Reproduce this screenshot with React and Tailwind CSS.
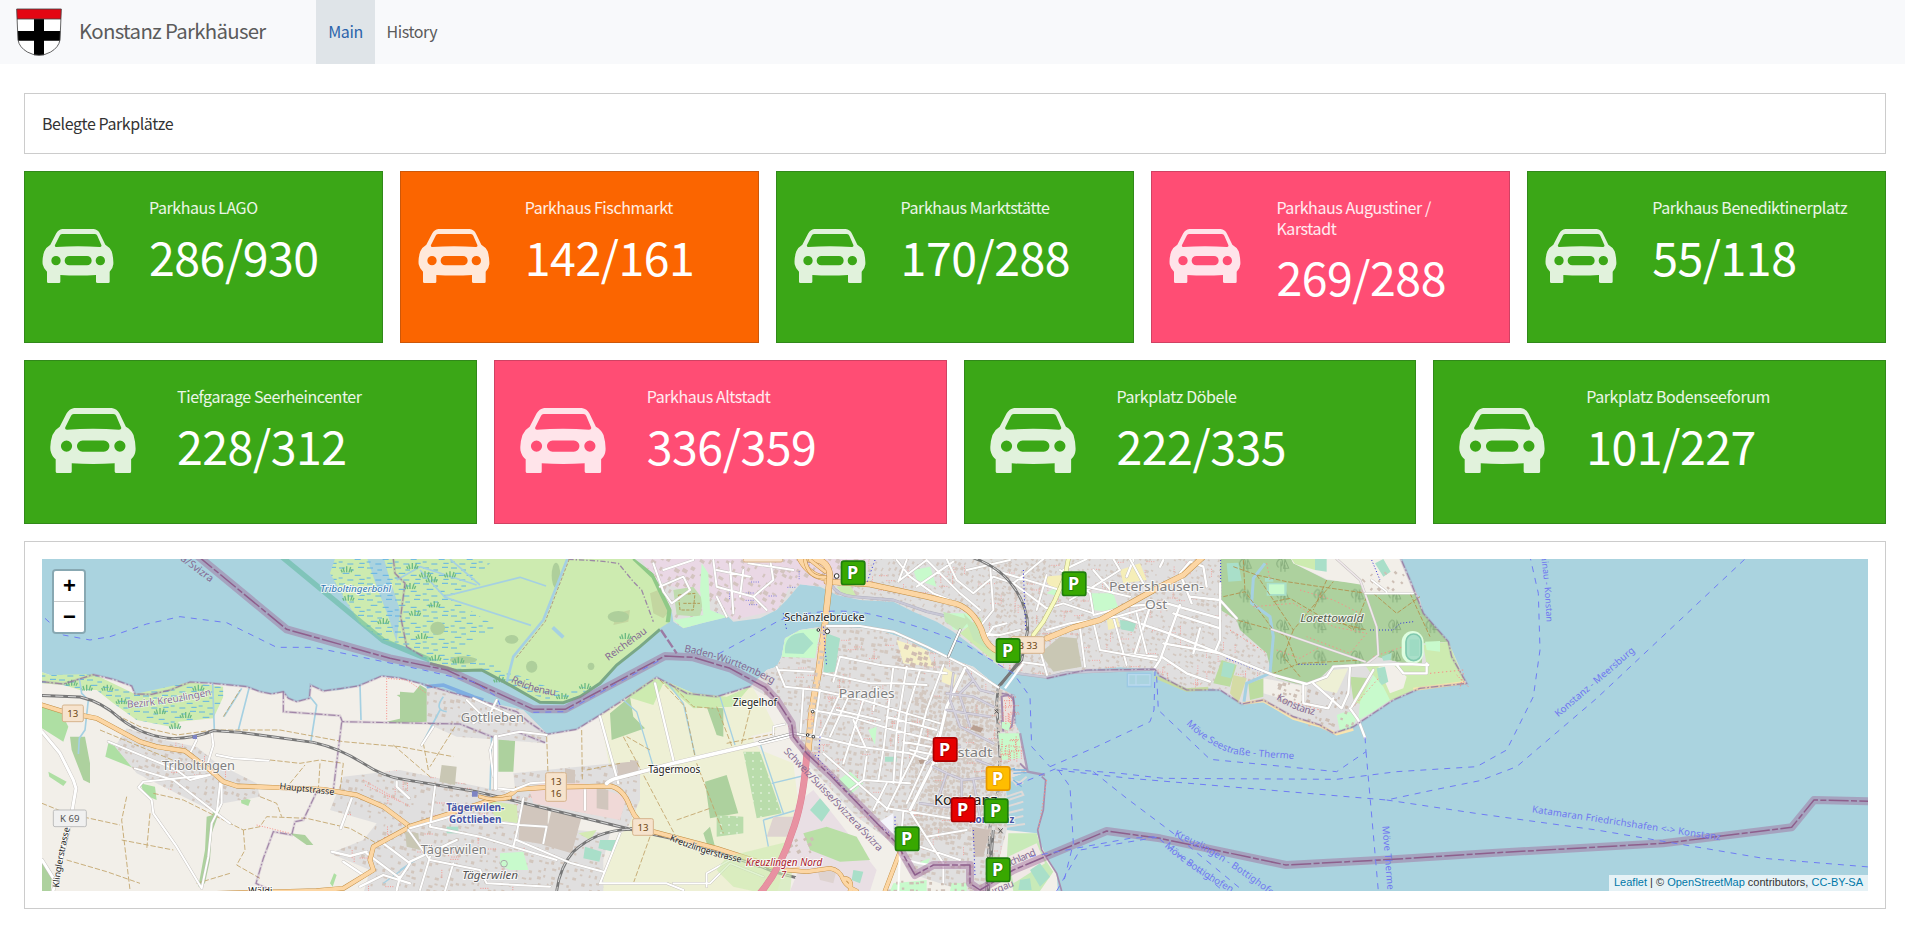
import React from "react";

const SANS = "font-['Noto_Sans_CJK_SC','Noto_Sans',sans-serif]";

const COLORS = {
  green: "bg-[#3ba717] border-[#31891a]",
  orange: "bg-[#fb6500] border-[#cd5709]",
  pink: "bg-[#ff4d74] border-[#d04263]",
};

const ROW_ONE = [
  ["Parkhaus LAGO", "286/930", "green"],
  ["Parkhaus Fischmarkt", "142/161", "orange"],
  ["Parkhaus Marktstätte", "170/288", "green"],
  ["Parkhaus Augustiner / Karstadt", "269/288", "pink"],
  ["Parkhaus Benediktinerplatz", "55/118", "green"],
];

const ROW_TWO = [
  ["Tiefgarage Seerheincenter", "228/312", "green"],
  ["Parkhaus Altstadt", "336/359", "pink"],
  ["Parkplatz Döbele", "222/335", "green"],
  ["Parkplatz Bodenseeforum", "101/227", "green"],
];

function Crest() {
  return (
    <svg className="h-12 w-[46px]" viewBox="0 0 138 144">
      <path d="M2 3H136L132 96Q128 118 104 132Q88 141 69 142Q50 141 34 132Q10 118 6 96Z" fill="#fff" />
      <path d="M2 3H136L135 33H3Z" fill="#e30613" />
      <path d="M54 33H84V142H54ZM5 69H133L132 98H6Z" fill="#000" />
      <path d="M2 3H136L132 96Q128 118 104 132Q88 141 69 142Q50 141 34 132Q10 118 6 96ZM3 33H135" fill="none" stroke="#444" strokeWidth="2.5" />
    </svg>
  );
}

function Car({ className }) {
  return (
    <svg className={className} viewBox="38 27 214 162" fill="#fff" fillOpacity=".85">
      <path
        fillRule="evenodd"
        d="M98 27Q145 25 192 27Q205 29 211 41L227 74Q240 81 246 94Q252 115 251 133Q250 146 240 155V185Q240 189 236 189H204Q199 189 199 185V165Q145 168 92 165V185Q92 189 88 189H56Q52 189 52 185V155Q42 147 39 133Q37 114 44 94Q50 81 62 74L79 41Q86 29 98 27ZM97 42Q92 42 90 47L76 75Q74 81 80 81Q145 77 210 81Q217 81 215 75L203 47Q201 42 196 42ZM79 108A14 14 0 1 0 79 136A14 14 0 1 0 79 108ZM212 108A14 14 0 1 0 212 136A14 14 0 1 0 212 108ZM119 108A14 14 0 0 0 119 136H172A14 14 0 0 0 172 108Z"
      />
    </svg>
  );
}

function Tile({ item, large }) {
  const [label, value, color] = item;
  return (
    <div className={`flex min-w-0 flex-1 border text-white ${COLORS[color]}`}>
      <div className={large ? "w-[152px] shrink-0 pl-[25px] pt-[47px]" : "w-[124px] shrink-0 pl-[17px] pt-[57px]"}>
        <Car className={large ? "h-[65px] w-[86px]" : "h-[54px] w-[72px]"} />
      </div>
      <div className="min-w-0 flex-1 pr-4 pt-[25px]">
        <div className="text-[16px] leading-[20.5px] tracking-[-0.42px] text-white/90">{label}</div>
        <div className="mt-[7px] text-[46.5px] leading-[62px] tracking-[-0.5px] whitespace-nowrap">{value}</div>
      </div>
    </div>
  );
}

/* ---- map drawing: three units per pixel ---- */

function random(seed) {
  let s = seed;
  return () => {
    s = (s * 16807) % 2147483647;
    return s / 2147483647;
  };
}

function houses(seed, x0, y0, x1, y1, step, deg, min = 5, max = 13) {
  const r = random(seed);
  const a = (deg * Math.PI) / 180;
  const c = Math.cos(a);
  const s = Math.sin(a);
  let d = "";
  for (let y = y0; y < y1; y += step) {
    for (let x = x0; x < x1; x += step) {
      if (r() < 0.2) continue;
      const w = min + r() * (max - min);
      const h = min + r() * (max - min) * 0.7;
      const px = x + r() * step * 0.5;
      const py = y + r() * step * 0.5;
      d += `M${px.toFixed(1)} ${py.toFixed(1)}l${(w * c).toFixed(1)} ${(w * s).toFixed(1)}l${(-h * s).toFixed(1)} ${(h * c).toFixed(1)}l${(-w * c).toFixed(1)} ${(-w * s).toFixed(1)}z`;
    }
  }
  return d;
}

function specks(seed, x0, y0, x1, y1, n) {
  const r = random(seed);
  let d = "";
  for (let i = 0; i < n; i++) {
    let x = x0 + r() * (x1 - x0);
    let y = y0 + r() * (y1 - y0);
    const vertical = r() < 0.5;
    for (let k = 0; k < 4; k++) {
      d += `M${x.toFixed(0)} ${y.toFixed(0)}h3`;
      if (vertical) y += 7;
      else x += 7;
    }
  }
  return d;
}

const G6 = ({ children }) => <g transform="translate(1110 0)">{children}</g>;
const G7 = ({ children }) => <g transform="translate(2190 0)">{children}</g>;
const G8 = ({ children }) => <g transform="translate(3270 0)">{children}</g>;
const G9 = ({ children }) => <g transform="translate(4350 0)">{children}</g>;

const Road = ({ d, w = 7, c = "#fff", edge = "#c4c0bd" }) => (
  <g fill="none" strokeLinecap="round" strokeLinejoin="round">
    <path d={d} stroke={edge} strokeWidth={w + 2.5} />
    <path d={d} stroke={c} strokeWidth={w} />
  </g>
);
const Main = ({ d, w = 12 }) => <Road d={d} w={w} c="#fcd6a4" edge="#c08a3c" />;
const Rail = ({ d }) => (
  <g fill="none">
    <path d={d} stroke="#777" strokeWidth="8.5" />
    <path d={d} stroke="#e8e8e8" strokeWidth="2.6" strokeDasharray="24 14" />
  </g>
);
const Track = ({ d }) => <path d={d} fill="none" stroke="#c2a469" strokeWidth="2.6" strokeDasharray="16 6" />;
const Stream = ({ d, w = 5 }) => <path d={d} fill="none" stroke="#a5d0e2" strokeWidth={w} strokeLinejoin="round" />;
const Ferry = ({ d }) => <path d={d} fill="none" stroke="#6f7cf5" strokeWidth="3" strokeDasharray="18 18" />;
const Limit = ({ d }) => (
  <g fill="none">
    <path d={d} stroke="#9d7ba6" strokeOpacity=".25" strokeWidth="8" />
    <path d={d} stroke="#92739c" strokeOpacity=".8" strokeWidth="3.5" strokeDasharray="22 6 5 6" />
  </g>
);
const Frontier = ({ d }) => (
  <g fill="none" strokeLinejoin="round">
    <path d={d} stroke="#a06f9c" strokeOpacity=".48" strokeWidth="24" />
    <path d={d} stroke="#8d5f8c" strokeWidth="4.5" strokeDasharray="60 7 18 7" />
  </g>
);
const Label = ({ x, y, w, size = 30, fill = "#222", children, ...rest }) => (
  <text x={x} y={y} textLength={w} lengthAdjust="spacingAndGlyphs" fontSize={size} fill={fill} stroke="#fff" strokeOpacity=".75" strokeWidth="6" strokeLinejoin="round" paintOrder="stroke" {...rest}>
    {children}
  </text>
);
const Along = ({ id, d, size = 29, fill = "#7077f0", w, halo = 0, children, ...rest }) => (
  <g>
    <path id={id} d={d} fill="none" />
    <text fontSize={size} fill={fill} stroke="#fff" strokeOpacity=".7" strokeWidth={halo} paintOrder="stroke" textLength={w} {...rest}>
      <textPath href={`#${id}`}>{children}</textPath>
    </text>
  </g>
);
const Shield = ({ x, y, w, h = 50, lines, grey }) => (
  <g>
    <rect x={x} y={y} width={w} height={h} rx="5" fill={grey ? "#f0f0f0" : "#f6e3cd"} stroke={grey ? "#bdbdbd" : "#d6b48c"} strokeWidth="3" />
    {lines.map((t, i) => (
      <text key={t} x={x + w / 2} y={y + 36 + i * 36} fontSize="29" textAnchor="middle" fill={grey ? "#555" : "#6b4511"}>
        {t}
      </text>
    ))}
  </g>
);

const PINS = [
  [243, 32, "g"],
  [906, 65, "g"],
  [708, 265, "g"],
  [519, 562, "r"],
  [678, 649, "y"],
  [573, 743, "r"],
  [672, 746, "g"],
  [405, 830, "g"],
  [678, 923, "g"],
];
const PIN_FILL = { g: ["#38a800", "#1f7d0c"], r: ["#e60000", "#a80000"], y: ["#ffbd00", "#e69800"] };

const SOUTH =
  "M0 355L60 375L110 388L190 372L250 388L305 408L315 432L365 433L420 420L480 396L550 400L650 410L690 425L725 432L760 425L775 445L800 455L838 445L842 405L880 423L930 420L985 408L1055 378L1110 384L1170 400L1200 420L1280 430L1330 445L1410 470L1460 485L1495 515L1550 553L1640 538L1710 495L1760 465L1810 430L1880 382L1905 395L1970 430L2060 440L2150 415L2170 408L2210 360L2240 350L2255 320L2265 265L2310 240L2390 228L2540 238L2620 265L2690 300L2750 325L2830 350L2905 412L2915 430L2950 435L2955 520L2940 550L2970 550L2980 600L2993 665L2950 680L2925 690L2930 740L2930 840L3020 850L3040 900L3080 970L3085 1040L0 1040Z";
const NORTH =
  "M1805 20L1870 70L1925 180L1930 215L1960 235L2015 220L2095 200L2110 215L2190 205L2240 180L2270 150L2310 103L2370 110L2420 135L2490 150L2590 155L2650 185L2720 215L2770 245L2830 290L2910 350L2960 370L3050 385L3110 370L3170 360L3270 352L3375 358L3390 378L3470 420L3535 415L3570 420L3635 462L3700 450L3740 475L3790 500L3870 525L3910 550L3970 530L4030 490L4090 450L4170 415L4310 400L4265 320L4255 275L4180 190L4170 150L4140 90L4110 20Z";
const RIED =
  "M917 20L900 70L940 140L990 220L1060 270L1130 290L1200 335L1280 362L1355 360L1430 400L1530 457L1600 458L1650 440L1710 400L1760 345L1830 290L1890 235L1920 215L1925 180L1870 70L1805 20Z";
const TOWN =
  "M2160 410L2210 360L2240 350L2255 320L2265 265L2310 240L2390 228L2540 238L2620 265L2690 300L2830 350L2905 412L2950 435L2955 520L2970 550L2993 665L2925 690L2930 840L2880 1030L2820 1030L2640 970L2590 880L2480 800L2330 640L2280 540L2230 450Z";

function MapView() {
  return (
    <svg className="block h-full w-full font-['Noto_Sans',sans-serif]" viewBox="36 27 5478 996" preserveAspectRatio="none">
      <defs>
        <clipPath id="town"><path d={TOWN} /></clipPath>
        <clipPath id="north"><path d={NORTH} /></clipPath>
        <clipPath id="ried"><path d="M900 20H1400L1270 150L1400 230L1280 300L1500 390L1600 430L1700 400L1600 470L1350 370L900 300Z" /></clipPath>
        <clipPath id="riedAll"><path d={RIED} /></clipPath>
        <clipPath id="reedW"><path d="M0 355L60 375L190 372L315 432L480 396L580 410V440L550 505L445 515V535L320 510L250 460L200 420L150 420L100 405L36 400Z" /></clipPath>
        <clipPath id="villages">
          <path d="M255 590L290 535L400 570L500 590L560 640L620 670L680 700L690 740L580 760L560 790L460 740L320 670Z M900 780L940 680L1110 660L1250 690L1500 740L1470 800L1640 840L1740 850L1720 930L1720 1030L1000 1030L1020 960L900 910L1000 870L1040 820Z M1190 400L1300 440L1480 480L1550 550V580L1280 560L1190 520Z M1450 670L1750 640L1830 650V750L1790 840L1460 760Z" />
        </clipPath>
        <pattern id="reeds" width="84" height="48" patternUnits="userSpaceOnUse">
          <path d="M3 6h18M34 12h14M60 4h18M14 22h20M50 28h18M2 36h12M28 42h18M64 40h16" stroke="#5fb2e6" strokeWidth="3" />
        </pattern>
        <g id="reed">
          <path d="M0 22V4M-7 22L-11 8M7 22L12 6M-13 22L-17 14M13 22L17 13" fill="none" stroke="#6cba83" strokeWidth="4" />
        </g>
        <g id="tree">
          <path d="M0 25V-6M12 25V4M-7 12C-18 2 -10 -8 -4 -13C5 -16 7 -2 2 8M8 15L12 -11L23 14Z" fill="none" stroke="#87ad7d" strokeWidth="3" />
        </g>
        <pattern id="trees" width="112" height="92" patternUnits="userSpaceOnUse"><use href="#tree" x="35" y="40" /></pattern>
        <pattern id="orchard" width="24" height="24" patternUnits="userSpaceOnUse"><rect width="24" height="24" fill="#b9dcab" /><circle cx="9" cy="9" r="3" fill="#dcefd5" /></pattern>
      </defs>

      <rect x="0" y="0" width="5600" height="1100" fill="#aad3df" />
      <path d={SOUTH} fill="#f2efe9" />
      <path d={RIED} fill="#cdebb0" />
      <path d={NORTH} fill="#e0dfdf" />
      <path d={TOWN} fill="#e0dfdf" />

      {/* reserve */}
      <g clipPath="url(#riedAll)">
        <path d="M1010 20L1060 20L1080 90L1110 180L1100 275L1075 200L1040 110Z" fill="#aad3df" />
        <g clipPath="url(#ried)"><rect x="900" y="20" width="900" height="460" fill="url(#reeds)" /></g>
        <G6>
          <path d="M650 190L690 180L685 215L640 225ZM750 130L800 110L810 180L790 205L760 190Z" fill="#c3d6a0" />
          <g fill="#aecf9b">
            <ellipse cx="113" cy="235" rx="22" ry="20" /><ellipse cx="335" cy="268" rx="20" ry="13" /><ellipse cx="395" cy="350" rx="17" ry="18" />
            <ellipse cx="573" cy="349" rx="10" ry="11" /><ellipse cx="655" cy="200" rx="32" ry="17" /><ellipse cx="468" cy="76" rx="13" ry="38" /><ellipse cx="190" cy="330" rx="40" ry="11" />
          </g>
          <path d="M505 28L600 33L655 40L700 95L725 120L760 215" fill="none" stroke="#9d8aa5" strokeWidth="4" strokeDasharray="16 6 4 6" />
          <path d="M706 20L765 75L815 180L810 218" fill="none" stroke="#8fc987" strokeWidth="26" />
          <Stream w={8} d="M502 27L430 210L340 320L318 405" />
          <path d="M508 27L436 214L348 324" fill="none" stroke="#b29b86" strokeWidth="3" strokeDasharray="10 5" />
          <Stream d="M-10 90L60 50L230 105M130 140L360 82L438 108M60 60L135 142L393 226M150 27L240 105" />
          <path d="M458 232L490 262" stroke="#a5d0e2" strokeWidth="11" />
        </G6>
      </g>
      {[[950, 45], [955, 130], [1060, 200], [1155, 175], [1175, 245], [1185, 60], [1140, 95], [1147, 35], [1205, 75], [1260, 60], [1213, 150], [1216, 310], [1285, 318], [1408, 375], [1596, 425], [1665, 395], [1786, 245]].map(([x, y]) => (
        <use key={`${x}-${y}`} href="#reed" x={x} y={y} />
      ))}
      <path d="M755 20L1060 272L1200 330" fill="none" stroke="#5cb89a" strokeOpacity=".55" strokeWidth="16" />
      <path d="M1200 340L1280 362L1355 360L1430 400L1530 457L1600 458L1650 440L1710 400L1760 345L1830 290L1890 238" fill="none" stroke="#7aa886" strokeWidth="9" />

      {/* western shore and fields */}
      <g clipPath="url(#reedW)">
        <rect x="0" y="340" width="620" height="210" fill="#cdebb0" />
        <rect x="0" y="340" width="620" height="210" fill="url(#reeds)" />
      </g>
      {[[125, 385], [232, 400], [275, 440], [390, 470], [467, 482], [505, 400], [435, 515], [170, 400]].map(([x, y]) => (
        <use key={`${x}-${y}`} href="#reed" x={x} y={y} />
      ))}
      <path d="M36 470L95 490L115 530L100 575L36 535ZM235 580L325 620L312 655L226 620ZM330 700L375 710L380 750L345 735ZM55 665L110 695L100 708L58 680ZM632 742L662 750L655 768L634 760ZM900 1000L912 970L920 975L908 1010Z" fill="#aedfa3" />
      <path d="M120 560L165 560L180 640L180 700L160 690L125 600ZM36 930L65 980L62 1030L36 1030ZM548 740L575 725L570 780L545 850L540 930L525 1000L505 1010L525 900L530 800L548 795ZM780 850L825 855L850 885L830 885ZM1100 435L1150 430L1170 405L1195 420L1195 515L1100 518L1070 515L1135 500L1135 460Z" fill="#add19e" />
      <path d="M1755 640L1950 590L2160 555L2190 600L2290 640L2310 800L2240 1030L1700 1030L1760 860L1800 830L1780 720Z" fill="#eef0d5" />
      <path d="M1710 495L1790 440L1880 385L1920 400L1990 430L2060 440L2165 408L2210 480L2240 540L1740 660Z" fill="#eef0d5" />
      <path d="M1405 545L1457 545L1450 665H1405ZM1740 490L1800 440L1810 500L1845 535L1745 570ZM1110 425L1170 430L1170 515H1110ZM2025 695L2090 675L2125 790L2040 805ZM2020 850L2040 830L2055 890L2035 895ZM2030 470L2080 475V560L2060 555Z" fill="#add19e" />
      <path d="M1790 440L1870 385L1910 395L1990 430L2090 440L2160 410L2110 470L1990 475L1900 400L1870 465Z" fill="#cdebb0" />
      <path d="M2140 605H2190L2255 790L2180 805ZM2060 795L2140 800L2140 850L2060 860Z" fill="url(#orchard)" />
      <g clipPath="url(#villages)">
        <rect x="200" y="380" width="1700" height="700" fill="#e0dfdf" />
        <path d={houses(7, 240, 500, 720, 800, 20, 22)} fill="#d2c6bd" />
        <path d={houses(11, 880, 400, 1860, 1030, 22, 14)} fill="#d2c6bd" />
        <path d={specks(4, 900, 660, 1500, 1030, 60)} stroke="#f6938e" strokeWidth="3" />
        <path d={specks(6, 400, 560, 600, 760, 12)} stroke="#f6938e" strokeWidth="3" />
      </g>
      <G6>
        <path d="M390 725L430 690L550 700L680 740L660 810L400 760Z" fill="#f0d9d7" />
        <path d="M365 762L445 770L440 885L355 870ZM455 780L545 800L515 910L430 885ZM650 640L690 635V680H655ZM690 630L715 632V665L690 672ZM495 655L525 660V700H495ZM465 710L500 715V745H465ZM590 715L625 720V780L590 775Z" fill="#d1c6bd" />
        <path d="M600 870L648 870L640 905L595 895ZM555 890L605 905L598 935L550 925Z" fill="#a9dfc9" />
        <path d="M535 850L590 840L570 870ZM260 750L350 765L355 820L290 810Z" fill="#d4eab4" />
        <path d="M300 910L370 905L385 960L330 960L300 945Z" fill="#c8facc" />
        <circle cx="312" cy="941" r="10" fill="none" stroke="#aaa" strokeWidth="3" />
        <path d="M125 645L170 650L165 705L118 695ZM15 845L55 850L60 900L20 890Z" fill="#c9c7b4" />
        <path d="M140 830L175 830V850H140Z" fill="#a9dfc9" />
        <path d="M80 410L130 405L220 440M170 425L250 450" fill="none" stroke="#7eaee2" strokeWidth="11" />
      </G6>
      <Stream d="M148 385L155 430L175 450L165 540L148 565L145 612M635 415L582 500M657 415L625 540M840 440L860 465L843 572M990 405L993 510M548 400L553 540M1230 480L1175 585M1240 440Q1210 480 1250 485M1385 560L1380 720" />
      <Stream w={4} d="M1780 450L1820 485L1870 650M1910 395L1960 460L1995 615M2070 440L2115 585M2190 580L2260 790M2225 700L2330 675M2200 810L2300 780M2200 810L2215 890M1110 960L1170 920L1060 1000" />
      <Track d="M36 465L80 480M580 500L630 420M550 540L440 555L330 530L270 500M550 540L750 540L940 575L1110 590L1270 620M210 540L500 660M290 740L275 810L300 1020M360 790L350 900M36 760L110 790L270 825M110 930L230 965L330 1000M275 870L430 900M370 730L460 750L640 840L690 830L710 800L830 805L960 835L1040 880M640 840L645 900L620 945L690 985M690 740L740 760L755 800M720 630L810 640L870 630L940 640L930 720M780 700L825 645M870 640L865 720M1275 530L1200 650M1550 560L1555 700M1655 540L1657 690M1090 585L1200 680M500 1000L600 970M1180 580L1195 660" />
      <Track d="M1780 560L1935 855M1860 600L1790 560M1890 390L1965 470L1995 620M1920 400L1990 470L2050 475M2000 640L2080 850M2060 470L2110 600M2160 480L2130 600M1940 810L2040 775M1860 860L1810 1000M2090 580L2240 550M1670 660L1770 640" />
      <Limit d="M36 395L100 402L190 374L250 388L305 408L315 432L365 433L420 420L480 396L550 400L650 410L690 425L725 432L760 425L775 445L800 455L838 445L842 405L880 423L985 408L1055 378L1110 384" />
      <Limit d="M1110 384L1170 400L1280 432L1330 445L1460 485L1495 515L1550 553L1640 538L1710 495L1810 430L1880 382L1970 430L2060 440L2165 408" />
      <Limit d="M760 425V485L930 497L937 515L1290 522L1390 562L1460 545L1545 578" />
      <Limit d="M935 517L910 720L860 725L820 810L795 815L785 855L730 845L700 925L678 1000L720 1020" />
      <Limit d="M1090 27L1095 70L1125 100L1112 200L1130 290L1180 320" />
      <path d="M1070 508V385L1130 390L1190 430M680 825L780 850M1000 690L1140 770M1005 705L1110 755" fill="none" stroke="#fa8e87" strokeWidth="3" strokeDasharray="3 5" />

      {/* western roads */}
      <Road d="M36 545L90 610L130 690L138 715L118 830L70 1020M36 930L70 985" w={9} />
      <Road d="M235 575L440 660L480 690L540 675L340 695L325 712L365 750L370 790L440 890L515 1015M315 655L430 690L560 790L570 700M480 610L500 570M545 545L550 585L530 650M560 615L610 625L715 632M575 700L575 760L545 820L535 920L515 1015M560 790L600 820" w={6} />
      <Road d="M965 745L932 835M1100 695V710L1138 745M905 905L960 918L1010 905M940 935L1000 975M1010 910L1110 985L1140 940L1060 880M1110 980L1100 1020M1140 935L1280 870M990 1010L1060 975L1140 1000" w={7} />
      <Rail d="M0 435L150 441Q215 455 270 505Q340 560 430 566Q500 563 550 542L630 547L850 577Q930 595 1000 640Q1060 680 1120 688L1340 725L1810 840L2060 895L2230 965L2400 1010L2500 1025" />
      <Rail d="M1800 838Q1700 840 1630 905Q1590 950 1580 1023" />
      <Rail d="M1800 835L1830 838L1970 873L2190 950" />
      <Main d="M20 460L100 485L200 505L330 575L380 590L465 603L540 660L580 695L620 708L880 718L980 735L1060 770L1140 830L1030 890L1020 930L1030 960L940 1015L860 1022L560 1030" />
      <Main d="M1138 830L1400 745Q1440 740 1460 718L1550 712L1740 708Q1780 715 1800 770Q1820 820 1870 845L2060 895L2230 950Q2330 950 2400 980" />
      <Main w={9} d="M1350 740Q1390 755 1440 743" />
      <G6>
        <Road d="M285 715L287 560L360 545L440 555M285 560L270 600L280 680M100 530L65 585M290 715L340 720L390 700L460 695M105 710L90 830M370 745L350 850L340 890M350 870L515 940L610 965M90 830L240 860L470 930M25 840L90 930L240 960M90 920L60 1020M160 940L135 1023M240 960L260 1000L450 1010M30 835L150 800L360 825L440 830L430 880M555 720V780M660 850L600 1000L800 1000L850 1020M200 450L250 500L220 520M220 445L340 500M290 450L260 510" w={6} />
        <Road d="M287 560V715" w={11} />
        <Road d="M600 500L655 700M765 400L820 630" w={7} />
        <Road d="M620 700Q630 690 650 685L820 640L1150 563L1190 550" w={11} />
        <Road d="M1120 555V530L1155 522M820 1000L930 1000L990 940L1090 980M920 1010V970L990 930" w={5} />
      </G6>
      <path d="M2295 870L2280 1030H2200L2110 1010L2060 960L2090 920Z" fill="#cdebb0" fillOpacity=".6" />
      <path d="M488 555H501V567H488ZM1326 724H1343V740H1326Z" fill="#7d84c4" />

      {/* northern quarters */}
      <g clipPath="url(#north)">
        <path d="M1830 20H2520L2500 100L2280 110L2240 180L2110 210L2060 150L1960 120L1870 90Z" fill="#ead8e5" />
        <path d={houses(21, 1840, 20, 2480, 230, 24, 30, 6, 17)} fill="#d3c4bf" />
        <path d={houses(25, 2440, 20, 3050, 390, 18, -60, 4, 12)} fill="#d3c8c0" />
        <path d={houses(29, 2900, 20, 3700, 480, 17, 25, 4, 11)} fill="#d3c8c0" />
        <path d={houses(31, 3600, 400, 4100, 560, 20, 25)} fill="#d3c8c0" />
        <path d={specks(13, 2500, 30, 3700, 420, 200)} stroke="#f59b96" strokeWidth="2.5" />
        <path d={specks(15, 1840, 30, 2500, 220, 22)} stroke="#6b6bdc" strokeWidth="2.5" />
        <path d="M1930 120L1990 110L2020 150L2010 200L1940 195Z" fill="#bfdcae" />
        <path d="M1945 135L1995 130L1990 180L1950 180ZM1960 160H2010" fill="none" stroke="#b09a58" strokeWidth="3" strokeDasharray="10 4" />
        <path d="M2015 40L2035 70L2040 180L2090 200L2060 220L1960 235L1930 210L2020 195L2010 120Z" fill="#c8facc" />
        <path d="M2650 60L2700 50L2720 110L2660 90ZM2750 190L2820 190L2830 230L2770 240ZM3180 130H3250L3270 190L3190 180ZM3050 130L3080 110L3090 140Z" fill="#c8facc" />
        <path d="M2850 200L2880 290L2920 320L2900 340L2790 250ZM2420 110L2460 105L2480 140L2440 135Z" fill="#cdebb0" />
        <path d="M3030 310L3090 260L3140 265L3155 350L3070 365Z" fill="#c9c7b4" />
        <path d="M3040 80L3100 75L3090 120L3060 110ZM3230 205L3260 195L3270 230L3235 240ZM3270 60L3330 40L3350 90L3280 100Z" fill="#f5eeb8" />
        <path d="M3270 210L3320 215L3310 245L3272 238Z" fill="#a9dfc9" />
      </g>
      <Road w={6} d="M1870 40L1900 125L1925 160L1980 120L1960 80L1890 110M1900 60L1990 30M2050 30L2060 110L2170 140L2210 180M2060 60L2160 80M2100 40L2110 190M2140 60L2130 140M2060 140L2090 200M2170 140L2230 90L2220 27M2155 40L2290 60" />
      <G8>
        <path d="M302 20L302 180L350 210L360 240L440 310L455 370L480 395L550 405L600 385L640 347L740 340L770 320L850 340L905 345L910 280L985 275L910 190L885 130L730 130L720 100L620 90L520 40L510 20Z" fill="#add19e" />
        <path d="M302 20L302 180L350 210L360 240L440 310L455 370L480 395L550 405L600 385L640 347L740 340L770 320L850 340L905 345L910 280L985 275L910 190L885 130L730 130L720 100L620 90L520 40L510 20Z" fill="url(#trees)" />
        <path d="M510 20L520 40L620 88L730 105V130L880 128L835 20Z" fill="#f2efe9" />
        <path d="M510 20L525 42L585 60V20Z" fill="#cdebb0" />
        <path d="M320 40L355 38L365 92L325 95ZM435 83H460V95H435ZM585 27H620V65L585 60ZM765 40L790 27L812 65L790 80ZM440 98H500V137H440Z" fill="#a9dfc9" />
        <path d="M447 103H493V132H447Z" fill="#c8facc" />
        <path d="M455 380L540 405L600 385L640 347L880 343L930 340L985 275L1040 400L900 415L820 450L700 530L640 550L600 525L520 500L430 450L365 462L300 420Z" fill="#e0dfdf" />
        <path d="M735 345L920 345L910 285L985 275L1035 395L900 412L760 475L700 455L760 380Z" fill="#cdebb0" />
        <path d="M775 350L820 345L860 380L850 415L810 430Z" fill="#f2efe9" />
        <path d="M770 355L795 350L805 395L780 408ZM785 320L815 308L812 330L790 332Z" fill="#a9dfc9" />
        <path d="M760 375L720 455L715 510L760 485L810 450L790 410ZM650 495Q690 475 710 500L700 530L660 545ZM915 275L960 273V305L920 300Z" fill="#c8facc" />
        <path d="M640 360L685 355L650 430L610 420L585 400Z" fill="#eef0d5" />
        <path d="M430 385L560 410L555 465L500 450L430 430Z" fill="#f2efe9" />
        <path d="M385 400L430 385V440L390 450ZM690 380L750 385L700 450ZM305 330L350 345L330 410L280 400Z" fill="#bcdca0" />
        <path d="M340 375L380 385L355 460L330 430Z" fill="#d5dba5" />
        <path d="M310 335L345 343L333 385L303 378Z" fill="#a9dfc9" />
        <path d={houses(41, 450, 390, 560, 460, 18, 20) + houses(43, 560, 420, 700, 520, 19, 20) + houses(45, 720, 60, 850, 120, 24, 45)} fill="#cdbfb5" />
        <rect x="845" y="243" width="66" height="98" rx="33" fill="#defde0" />
        <rect x="858" y="252" width="46" height="80" rx="23" fill="#a9dfc9" stroke="#7fc8ae" strokeWidth="5" />
        <rect x="869" y="268" width="28" height="50" fill="#9edbc3" />
        <path d="M105 380L200 420L265 415" fill="none" stroke="#c8dca0" strokeWidth="10" />
        <path d="M370 460L430 452L520 505L600 528L650 552L700 538" fill="none" stroke="#f9e5b0" strokeWidth="9" />
        <path d="M880 418L1035 398" stroke="#f9e5b0" strokeWidth="10" />
        <path d="M435 40L400 85L395 160L450 200L460 260L450 370L380 400L372 455" fill="none" stroke="#a5d0e2" strokeWidth="9" />
        <path d="M20 368H95V412H20Z" fill="#9cc9e4" />
        <path d="M26 374H90V405H26ZM48 405V375M60 404H90" fill="#aad3df" stroke="#b9d9ee" strokeWidth="4" />
        <path d="M340 50L410 75L500 95L600 110L740 130M310 140L375 125L460 240L350 210M410 75L520 240L640 95M460 155L510 145L620 210L740 240M520 240L490 320L540 380M740 140L700 240L640 200M760 130L830 190L900 140M530 340L500 260L460 240M620 90L580 180M370 30L375 125M870 130L930 260M730 330L540 340L460 370" fill="none" stroke="#b28f4b" strokeWidth="2.6" strokeDasharray="14 5" />
        <path d="M400 170L520 160L640 230L740 250L690 310L560 260M440 40L450 90M540 120L640 150L740 200M470 300L540 325L610 285M760 320L850 290M930 370L1030 360M700 470L780 380M330 240L440 310M500 450L600 480" fill="none" stroke="#fa8e87" strokeWidth="3" strokeDasharray="4 8" />
        <path d="M1010 375L1045 410M1030 370L1020 415" fill="none" stroke="#fa8e87" strokeWidth="3" strokeDasharray="4 5" />
        <path d="M302 30V180M755 30L780 90M750 240H820L840 220L880 215M535 343H620M0 200L140 245M320 325L460 378" fill="none" stroke="#3535d8" strokeWidth="3" strokeDasharray="3 6" />
        <Road w={5} c="#f0e8ec" d="M650 27L720 90L735 130L770 230L775 315L735 345M455 238L735 335" />
        <Road w={5} d="M735 130H880M755 90L800 125" />
        <Road w={7} d="M0 170L140 160L300 205M0 200L140 248L300 310L460 375L560 402L620 380L640 350L735 345L860 342L925 345M180 165L120 330L100 360M90 170L45 310M300 100V270L285 305M215 160L180 70L210 35L250 50L260 110M125 320L200 370L270 395M130 280L300 310M240 235L220 310M160 190L300 235M0 310L110 320M210 140L300 150L350 205M40 30L20 80M130 30L120 50M690 350L685 430L665 475L580 400M550 405V460L625 475L640 445M690 475L715 510L735 563M760 360L695 470M830 345L850 370H920V340" />
      </G8>
      <G7>
        <Road w={6} d="M410 30L450 80L520 130L570 150M440 30L415 95M420 90L500 30L560 90L600 130L660 180M470 110L580 35M560 27L590 90L640 130L700 80L760 100M620 60L750 30M760 100L860 175L910 160L1000 190M690 40L700 180L660 230M760 100L850 27M700 60L900 120M830 180L860 75M1000 190L990 130L910 60L980 27M900 60L980 110L1110 140M860 240L930 220L1070 200L1190 165M1000 195L1080 175M960 235L975 350M1000 215L1020 300L1190 330M1060 200L1100 345M1130 190L1160 310M840 300L862 378M780 335L850 345M660 250L720 255L780 240M680 260L700 230L740 220M930 150L1000 110L1080 60L1060 27M1000 60L1060 130M1110 27L1150 100" />
        <Road w={6} c="#c9c8d6" edge="#b0b0be" d="M215 105Q230 135 280 140L400 150L500 185L610 210M770 370L860 382L920 368L1180 358" />
        <path d="M550 185L630 210L600 245L555 215ZM610 190L680 260L700 310L640 270Z" fill="#c5e6b8" />
        <Road w={11} c="#f7fabf" edge="#b5b36b" d="M925 27L915 80L885 150L850 215L820 255" />
        <Main w={15} d="M120 27Q150 80 200 85M200 95L330 103L500 140L590 162Q640 180 665 240Q680 295 720 305M860 265L940 232L1020 210L1110 160L1200 110L1270 75L1330 20" />
        <Main w={17} d="M150 28Q205 25 210 80L195 220L175 370L155 480L145 600" />
        <Main w={9} d="M135 30Q145 85 195 82M150 30L195 65" />
        <Rail d="M630 20Q720 50 760 110Q805 170 803 240L785 330L715 410L710 460L720 620L715 720L690 830L680 1023" />
        <path d="M790 340L735 415" stroke="#fff" strokeWidth="7" /><path d="M776 335L722 405" stroke="#777" strokeWidth="8" />
      </G7>

      {/* old town and Paradies */}
      <g clipPath="url(#town)">
        <path d={houses(51, 2200, 220, 3000, 1030, 18, 12, 5, 14)} fill="#d3c8c0" />
        <path d={houses(57, 2640, 420, 2930, 860, 14, 20, 7, 13)} fill="#d3c8c0" />
        <path d={specks(61, 2240, 250, 2990, 960, 170)} stroke="#f59b96" strokeWidth="2.5" />
        <G7>
          <path d="M60 320L75 265L120 240L180 235L165 325ZM715 550H780V625L725 630ZM325 540L350 530L345 585ZM235 690L270 665L310 700L270 735Z" fill="#c8facc" />
          <path d="M75 310Q70 250 130 248L160 280L130 312ZM200 250L240 265L225 365L190 370ZM375 620H410V635H375Z" fill="#a9dfc9" />
          <path d="M410 270L500 300L520 350L430 340ZM550 350L590 375L580 410L545 395Z" fill="#f5f0c8" />
          <path d={houses(63, 410, 275, 520, 350, 20, 20, 9, 16)} fill="#d0bdb2" />
          <path d="M640 525L670 535L662 548L632 538ZM475 630L495 628L498 640L480 642Z" fill="#b89f91" />
          <path d="M635 830L690 840L670 920H645Z" fill="#cdbfb7" />
          <path d="M350 820L400 790V850L380 850Z" fill="#f4f4fa" />
        </G7>
      </g>
      <G7>
        <Road w={6} d="M200 228L300 228L400 245L500 290L620 350L715 412M50 350L75 410L170 420L310 450L440 490L540 520M240 320L360 345L560 370M190 370L330 400L410 400L500 405M155 480L270 500L400 540L520 570M150 555L300 590L450 610L530 640M55 360L160 365M240 320L220 395M270 430L210 560M310 450L250 640M400 350L370 600L355 690M440 350L410 540L400 700M480 360L440 490L420 700M550 345L500 480L470 600L380 780M190 610L380 775L450 785L570 805L660 810M130 420L120 570M180 420L160 560M240 430L180 560M280 510L320 600M270 720L310 690L450 700M510 590L430 575M440 760L540 540M310 690L320 620M340 780L380 700M450 785L550 940V1000M430 785L420 900M480 890L600 930M550 620L450 600M380 500L530 540M230 480L360 510M350 410L340 480M500 860L620 840" />
        <Road w={9} d="M615 355L560 470L520 640L450 780" />
        <Road w={5} c="#d6d3df" edge="#b4b0bf" d="M580 370L570 450L600 530L700 580M620 360L660 420L700 430M560 430L640 440L700 470M560 480L690 500M600 440L630 530M640 390L600 430M520 650L560 670L610 690L700 680M480 760L560 770L660 760M560 670L530 760M605 690V760M500 640L550 600L600 590M650 630L700 650L720 690M640 690L660 800" />
        <Road w={6} d="M600 240L565 320M0 575L100 550L160 560" c="#fff" edge="#777" />
        <path d="M725 440Q765 425 762 475L755 530Q730 545 728 510ZM780 640L800 660M730 545L725 510" fill="#ebe0dc" stroke="#a58caf" strokeWidth="6" />
        <path d="M725 515L755 518L745 542L725 535Z" fill="#c8facc" />
        <path d={specks(81, 728, 440, 755, 515, 14) + specks(83, 722, 555, 770, 620, 22)} stroke="#f58a84" strokeWidth="3" />
        <path d="M745 850L830 850L850 920L880 965L840 1023H760L740 930Z" fill="#c8eab8" />
        <path d="M745 920L830 880L855 940L760 1000Z" fill="#f0e8e6" /><path d="M810 960L840 940L870 980L840 1010ZM780 990L810 985L815 1020H775Z" fill="#a9dfc9" />
        <path d="M740 740L785 725L790 735L745 750M740 770L790 755M740 790L790 778M740 810L790 798M740 830L795 822M750 690L790 700M750 680L770 705L800 680" fill="none" stroke="#dfdad8" strokeWidth="6" />
        <path d="M760 660H800M760 670L800 668M760 690L785 710M735 662L765 655" fill="none" stroke="#7db4df" strokeWidth="4" />
        <path d="M845 680L857 690L850 780L833 840L845 900L890 970L905 1023" fill="none" stroke="#a58caf" strokeWidth="5" />
        <path d="M860 690L835 840" fill="none" stroke="#fa8e87" strokeWidth="3" strokeDasharray="4 6" />
        <path d="M780 550L790 600L803 665L855 675" fill="none" stroke="#a58caf" strokeWidth="7" strokeOpacity=".8" />
        <Rail d="M700 840L685 1023" />
        {/* southern suburbs */}
        <path d="M110 760L160 720L225 800L350 960L330 1023H90L120 950L50 960Z" fill="#e9dfe4" />
        <path d="M130 850L200 830L290 860L330 930L240 935L150 900Z" fill="#b9dfa6" />
        <path d="M150 780L180 745L210 780L185 815ZM280 960L310 965L300 1000L275 990Z" fill="#a9dfc9" />
        <path d="M480 935L510 925L500 950ZM400 1000L500 990V1023H390ZM575 1000H620V1023H570Z" fill="#c8facc" />
        <path d="M40 800L120 800L100 860L20 860ZM170 950L230 960L220 1000L180 990Z" fill="#ded3d0" />
        <path d={houses(71, 380, 990, 640, 1023, 20, 0) + houses(73, 60, 860, 160, 930, 20, -30)} fill="#cdbfb5" />
        <Road w={18} c="#e892a2" edge="#dc7f92" d="M140 615Q130 760 95 850Q60 960 0 1030" />
        <Main w={11} d="M80 960L140 965L210 955Q240 960 250 990Q260 1010 290 1023M250 985Q280 985 270 1023M420 905L375 1023" />
        <path d="M165 615L230 690L350 820L390 850M405 800V850M640 840L645 980M190 230L200 350M345 30L320 100M790 60L797 240M70 190L80 240M180 560L175 630" fill="none" stroke="#2424dd" strokeWidth="3" strokeDasharray="3 8" />
        <path d="M420 905L415 1023M420 920Q500 960 620 940" fill="none" stroke="#fff" strokeWidth="6" />
        <g fill="#fff" stroke="#333" strokeWidth="3">
          <circle cx="230" cy="78" r="7" /><circle cx="202" cy="244" r="7" /><circle cx="175" cy="240" r="4" /><circle cx="158" cy="485" r="4" /><circle cx="143" cy="555" r="4" /><circle cx="160" cy="560" r="4" />
        </g>
        <path d="M715 835L728 850M728 835L715 850M704 479L716 491M716 479L704 491" stroke="#555" strokeWidth="3" />
      </G7>

      {/* boundaries and ferry lines */}
      <Limit d="M2915 430L2950 436L2955 520M3050 385L3170 360L3375 358L3390 378L3470 420L3570 420L3635 462L3700 450L3790 500L3870 525L3910 550L3970 530L4090 450L4170 415L4310 400L4265 320L4255 275L4180 190L4140 90L4110 20" />
      <path d="M1893 240L1940 310" fill="none" stroke="#9b7aa3" strokeWidth="7" strokeDasharray="28 7" />
      <Frontier d="M500 15L770 238L1080 325L1250 360L1510 478H1605L1905 318L1990 322L2100 355L2205 412L2240 450L2285 520L2290 560L2330 610L2400 675L2600 880L2655 975L2710 945L2820 945V1000L2850 1020L2950 960L3230 843L3390 865L3768 945L4090 928L4350 911L4900 880L5285 832L5352 750L5530 754" />
      <Ferry d="M45 205L100 255L180 270L240 260L350 222L450 200L590 218L740 292L850 292L950 312L1180 360L1330 395L1400 440L1410 465M1510 487L1605 485L1900 325M2065 312L2170 255L2250 210Q2380 170 2510 190Q2650 220 2800 280L2950 370L3000 440L3005 590L3060 650" />
      <Ferry d="M3060 650L3200 590L3360 515L3372 480L3375 365M3380 380L3385 480L3540 628L3920 665L4008 605L4005 560M4008 605L4020 740L4045 1023M2960 705L3080 655L3270 670L3400 685L3920 688L4100 665L4340 650L4430 600L4510 440L4530 300L4525 130L4500 20M3080 660L3300 685L4070 750L4220 718L4350 692L4460 650L4700 445L5145 27M4070 750L4350 792L4700 840L5200 925L5530 952M3085 660L3120 710L3130 880L3100 1000M3190 665L3290 745L3430 850L3640 1023M3000 920L3300 865L3380 860L3540 990L3580 1023M3080 1023L3150 900L3380 862" />

      {/* lettering */}
      <Along id="svizra" d="M440 22L560 112" size="31" fill="#846a93">ra/Svizra</Along>
      <Label x="871" y="126" w="212" size={29} fill="#3277b5" fontStyle="italic">Triboltingerbohl</Label>
      <Along id="bezirk" d="M292 473Q400 468 560 432" size="30" fill="#8a7194" w="256" halo={4}>Bezirk Kreuzlingen</Along>
      <Label x="396" y="659" w="219" size={39} fill="#808080">Triboltingen</Label>
      <Along id="haupt" d="M748 717L925 737" size="27" fill="#222" halo={3} w="165">Hauptstrasse</Along>
      <Along id="kling" d="M87 1013Q92 940 125 815" size="27" fill="#222" halo={3} w="182">Klinglerstrasse</Along>
      <Label x="655" y="1032" w="72" size={27}>Wäldi</Label>
      <Shield x={97} y={465} w={63} lines={["13"]} />
      <Shield x={70} y={780} w={99} lines={["K 69"]} grey />
      <G6>
        <Along id="reich1" d="M332 395Q390 430 490 440" size="30" fill="#846a93" w="142">Reichenau</Along>
        <Along id="reich2" d="M625 333L752 240" size="30" fill="#846a93" w="146">Reichenau</Along>
        <Along id="baden" d="M852 305Q990 330 1130 408" size="30" fill="#846a93" w="285">Baden-Württemberg</Along>
        <Label x="182" y="517" w="190" size={39} fill="#808080">Gottlieben</Label>
        <Label x="999" y="468" w="132">Ziegelhof</Label>
        <Label x="745" y="668" w="156">Tägermoos</Label>
        <Label x="62" y="913" w="198" size={39} fill="#808080">Tägerwilen</Label>
        <Label x="187" y="988" w="167" size={31} fill="#555" fontStyle="italic">Tägerwilen</Label>
        <Label x="139" y="784" w="174" size={29} fill="#4756a6" fontWeight="700">Tägerwilen-</Label>
        <Label x="147" y="818" w="157" size={29} fill="#4756a6" fontWeight="700">Gottlieben</Label>
        <Along id="kreuz" d="M808 870Q900 912 1035 940" size="27" fill="#222" halo={3} w="226">Kreuzlingerstrasse</Along>
        <Label x="1037" y="948" w="230" size={30} fill="#a8182d" fontStyle="italic">Kreuzlingen Nord</Label>
        <Label x="1143" y="984" size={28} fill="#a8182d" fontStyle="italic">7</Label>
        <Shield x={437} y={668} w={62} h={86} lines={["13", "16"]} />
        <Shield x={698} y={806} w={62} lines={["13"]} />
      </G6>
      <G7>
        <rect x="-50" y="-12" width="118" height="48" rx="5" fill="#f6e3cd" stroke="#d6b48c" strokeWidth="3" />
        <Label x="73" y="213" w="241">Schänzlebrücke</Label>
        <Label x="236" y="443" w="168" size={38} fill="#808080">Paradies</Label>
        <Label x="537" y="620" w="160" size={38} fill="#808080">Altstadt</Label>
        <Label x="522" y="766" w="190" size={43} fill="#222">Konstanz</Label>
        <Label x="627" y="819" w="136" size={29} fill="#4756a6" fontWeight="700">Konstanz</Label>
        <Along id="schweiz" d="M70 605L370 920" size="30" fill="#846a93" w="415">Schweiz/Suisse/Svizzera/Svizra</Along>
        <Along id="deutsch" d="M690 975L850 905" size="29" fill="#846a93" w="152">Deutschland</Along>
        <Along id="thurgau" d="M660 1050L775 1003" size="29" fill="#846a93" w="112">Thurgau</Along>
        <Shield x={753} y={260} w={100} lines={["B 33"]} />
      </G7>
      <G8>
        <Label x="-33" y="122" w="284" size={37} fill="#808080">Petershausen-</Label>
        <Label x="75" y="178" w="67" size={37} fill="#808080">Ost</Label>
        <Label x="541" y="216" w="189" size={32} fill="#55604f" fontStyle="italic">Lorettowald</Label>
        <Along id="kn" d="M468 447Q520 483 590 497" size="30" fill="#846a93" w="125">Konstanz</Along>
        <Along id="see" d="M198 522Q265 590 345 613Q430 622 540 628" w="353">Möve Seestraße - Therme</Along>
        <Along id="bott1" d="M162 858Q290 910 480 1058" w="362">Kreuzlingen - Bottighofen</Along>
        <Along id="bott2" d="M133 890Q220 970 400 1065">Möve Bottighofen</Along>
        <Along id="therme" d="M787 828Q795 930 803 1030" w="192">Möve Therme</Along>
      </G8>
      <G9>
        <Along id="mainau" d="M180 -5Q195 100 200 222" size="27">Mainau - Konstanz</Along>
        <Along id="meers" d="M235 502L475 296" w="304">Konstanz - Meersburg</Along>
        <Along id="kat" d="M155 787L725 872" w="572">Katamaran Friedrichshafen &lt;-&gt; Konstanz</Along>
      </G9>

      <G7>
        {PINS.map(([x, y, k]) => (
          <g key={`${x}-${y}`}>
            <rect x={x + 1.5} y={y + 1.5} width="70" height="70" rx="7" fill={PIN_FILL[k][0]} stroke={PIN_FILL[k][1]} strokeWidth="5" />
            <text x={x + 35} y={y + 55} fontSize="54" fontWeight="700" textAnchor="middle" fill="#fff" stroke={PIN_FILL[k][1]} strokeWidth="5" paintOrder="stroke">P</text>
          </g>
        ))}
      </G7>
    </svg>
  );
}

export default function App() {
  return (
    <div className={`flex h-[933px] w-full flex-col overflow-hidden bg-white text-[#333] ${SANS}`}>
      <nav className="flex h-16 shrink-0 items-center bg-[#f8f9fb] pl-4">
        <Crest />
        <span className="ml-[17px] w-[237px] pb-[3px] text-[20.4px] leading-none tracking-[-0.7px] whitespace-nowrap text-[#5b5b5b]">Konstanz Parkhäuser</span>
        <a className="flex h-16 w-[59px] items-center justify-center bg-[#dfe4e8] pb-[2px] text-[16px] tracking-[-0.4px] text-[#2a63ab]">Main</a>
        <a className="flex h-16 items-center pb-[2px] pl-[11.5px] text-[16px] tracking-[-0.42px] text-[#5b5b5b]">History</a>
      </nav>
      <main className="flex flex-1 flex-col gap-[17px] px-6 pt-[29px] pr-[19px]">
        <section className="flex h-[61px] shrink-0 items-center border border-[#ccc] pb-[2px] pl-[17px] text-[16px] tracking-[-0.42px]">Belegte Parkplätze</section>
        <section className="flex h-[172px] shrink-0 gap-[17px]">
          {ROW_ONE.map((item) => <Tile key={item[0]} item={item} />)}
        </section>
        <section className="flex h-[164px] shrink-0 gap-[17px]">
          {ROW_TWO.map((item) => <Tile key={item[0]} item={item} large />)}
        </section>
        <section className="h-[368px] shrink-0 border border-[#ccc] p-[17px]">
          <div className="relative h-[332px] overflow-hidden">
            <MapView />
            <div className="absolute top-[10px] left-[10px] w-[34px] rounded-[4px] border-2 border-black/20 bg-clip-padding">
              <div className="flex h-[31px] items-center justify-center rounded-t-[2px] border-b border-[#ccc] bg-white pl-px font-['Liberation_Sans',sans-serif] text-[22px] leading-none font-bold text-black">+</div>
              <div className="flex h-[30px] items-center justify-center rounded-b-[2px] bg-white pl-px font-['Liberation_Sans',sans-serif] text-[22px] leading-none font-bold text-black">−</div>
            </div>
            <div className="absolute right-0 bottom-0 h-4 bg-white/70 px-[5px] font-['Liberation_Sans',sans-serif] text-[11px] leading-[15px] whitespace-nowrap text-[#333]">
              <a className="text-[#0078a8]">Leaflet</a> | © <a className="text-[#0078a8]">OpenStreetMap</a> contributors, <a className="text-[#0078a8]">CC-BY-SA</a>
            </div>
          </div>
        </section>
      </main>
    </div>
  );
}
